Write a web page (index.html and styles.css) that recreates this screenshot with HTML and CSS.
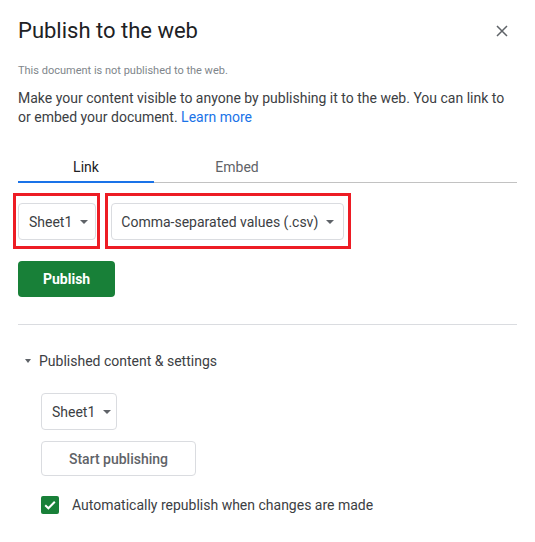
FILE: index.html
```html
<!DOCTYPE html>
<html>
<head>
<meta charset="utf-8">
<link rel="stylesheet" href="styles.css">
</head>
<body>
<div class="dialog">
  <div class="header">
    <div class="title">Publish to the web</div>
    <div class="close">
      <svg width="12" height="12" viewBox="0 0 12 12"><path d="M1 1L11 11M11 1L1 11" stroke="#5f6368" stroke-width="1.5" fill="none"/></svg>
    </div>
  </div>
  <div class="status">This document is not published to the web.</div>
  <p class="desc">Make your content visible to anyone by publishing it to the web. You can link to or embed your document. <a class="link" href="#">Learn more</a></p>
  <div class="tabs">
    <div class="tab tab-active">Link</div>
    <div class="tab tab-embed">Embed</div>
  </div>
  <div class="row">
    <div class="mark mark-a">
      <div class="select"><span>Sheet1</span><span class="arrow"></span></div>
    </div>
    <div class="mark mark-b">
      <div class="select"><span>Comma-separated values (.csv)</span><span class="arrow"></span></div>
    </div>
  </div>
  <button class="btn-primary">Publish</button>
  <div class="divider"></div>
  <div class="section-head"><span class="arrow arrow-small"></span><span>Published content &amp; settings</span></div>
  <div class="section-body">
    <div class="select select-inline"><span>Sheet1</span><span class="arrow"></span></div>
    <button class="btn-secondary">Start publishing</button>
    <label class="check-row">
      <span class="checkbox">
        <svg width="18" height="18" viewBox="0 0 18 18"><path d="M4.2 9.2L7.4 12.3L13.8 5.8" stroke="#fff" stroke-width="2" fill="none"/></svg>
      </span>
      <span>Automatically republish when changes are made</span>
    </label>
  </div>
</div>
</body>
</html>
```

FILE: styles.css
```css
* { box-sizing: border-box; }
html, body { margin: 0; padding: 0; background: #fff; }
body { font-family: Roboto, "Liberation Sans", sans-serif; color: #3c4043; }

.dialog { padding: 17px 18px 0 18px; width: 535px; }

.header { display: flex; justify-content: space-between; align-items: center; height: 28px; }
.title { font-size: 22px; line-height: 28px; color: #202124; }
.close { width: 24px; height: 24px; display: flex; align-items: center; justify-content: center; margin-right: 3px; }

.status { margin-top: 18px; font-size: 11px; line-height: 16px; color: #80868b; }

.desc { margin: 10px 0 0 0; font-size: 14px; line-height: 19px; color: #3c4043; }
.link { color: #1a73e8; text-decoration: none; }

.tabs { display: flex; margin-top: 20px; border-bottom: 1px solid #c2c2c2; }
.tab { font-size: 14px; font-weight: 400; line-height: 20px; padding: 10px 0 4px 0; text-align: center; border-bottom: 2px solid transparent; margin-bottom: -1px; color: #5f6368; }
.tab-active { width: 136px; color: #202124; border-bottom-color: #1a73e8; }
.tab-embed { width: 166px; }

.row { display: flex; gap: 5px; margin-top: 10px; margin-left: -5px; }
.mark { border: 3px solid #ed1c24; }
.mark-a { padding: 7px 1px 6px 2px; }
.mark-b { padding: 7px 4px 6px 3px; }

.select { display: inline-flex; align-items: center; gap: 8px; height: 37px; padding: 0 7px 0 10px; border: 1px solid #dadce0; border-radius: 4px; font-size: 14px; color: #3c4043; background: #fff; }
.mark-b .select { padding: 0 9px 0 9px; }
.arrow { display: inline-block; width: 0; height: 0; border-left: 4px solid transparent; border-right: 4px solid transparent; border-top: 4px solid #5f6368; }

.btn-primary { display: block; margin-top: 12px; height: 36px; padding: 0 25px; border: none; border-radius: 4px; background: #188038; color: #fff; font-family: Roboto, "Liberation Sans", sans-serif; font-size: 14px; font-weight: 700; }

.divider { margin-top: 27px; height: 1px; background: #dadce0; }

.section-head { display: flex; align-items: center; gap: 8px; margin-top: 26px; padding-left: 7px; font-size: 14px; line-height: 20px; color: #3c4043; }
.arrow-small { border-left-width: 3.5px; border-right-width: 3.5px; border-top-width: 4px; }

.section-body { padding-left: 23px; display: flex; flex-direction: column; align-items: flex-start; }
.select-inline { margin-top: 22px; width: 76px; padding-right: 6px; }

.btn-secondary { margin-top: 11px; height: 35px; width: 155px; padding: 0; border: 1px solid #dadce0; border-radius: 4px; background: #fff; color: #5f6368; font-family: Roboto, "Liberation Sans", sans-serif; font-size: 14px; font-weight: 500; }

.check-row { display: flex; align-items: center; gap: 13px; margin-top: 20px; font-size: 14px; line-height: 18px; color: #3c4043; }
.checkbox { display: block; width: 18px; height: 18px; border-radius: 2px; background: #188038; }
.checkbox svg { display: block; }
```
